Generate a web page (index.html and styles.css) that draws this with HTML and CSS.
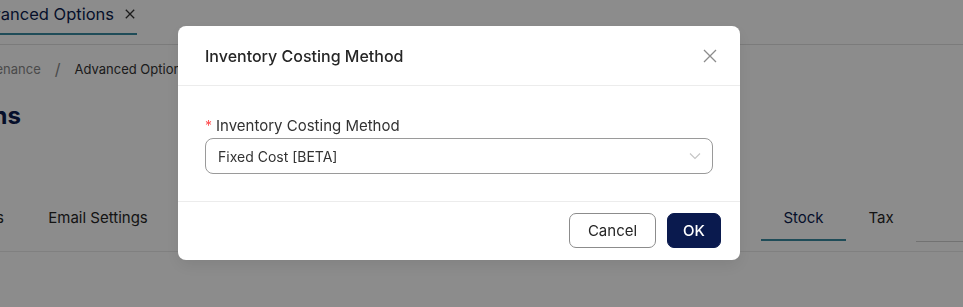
FILE: index.html
```html
<!DOCTYPE html>
<html>
<head>
<meta charset="utf-8">
<link rel="stylesheet" href="styles.css">
</head>
<body>
<div class="page">
  <div class="tabbar">
    <div class="tab-wrap">
      <div class="tab-active"><span>Advanced Options</span><svg class="tab-x" width="10" height="10" viewBox="0 0 10 10"><path d="M0.8 0.8L9.2 9.2M9.2 0.8L0.8 9.2" stroke="#333" stroke-width="1.3" fill="none"/></svg></div>
    </div>
  </div>
  <div class="crumbs-wrap">
    <div class="crumbs"><span class="crumb-muted">Maintenance</span><span class="crumb-sep">/</span><span class="crumb">Advanced Options</span></div>
  </div>
  <div class="heading-wrap"><h1 class="heading">Advanced Options</h1></div>
  <div class="card">
    <div class="subtabs">
      <div class="subtab-lead"><span class="subtab">Options</span></div>
      <span class="subtab w-email">Email Settings</span>
      <span class="subtab-gap"></span>
      <span class="subtab active w-stock">Stock</span>
      <span class="subtab w-tax">Tax</span>
      <span class="subtab-fill"></span>
    </div>
  </div>
</div>

<div class="overlay">
  <div class="modal">
    <div class="modal-header">
      <span class="modal-title">Inventory Costing Method</span>
      <svg class="close" width="14" height="14" viewBox="0 0 14 14"><path d="M1 1L13 13M13 1L1 13" stroke="#8c8c8c" stroke-width="1.3" fill="none"/></svg>
    </div>
    <div class="modal-body">
      <div class="label"><span class="req">*</span>Inventory Costing Method</div>
      <div class="select">
        <span class="select-value">Fixed Cost [BETA]</span>
        <svg class="chev" width="12" height="8" viewBox="0 0 12 8"><path d="M1 1.5L6 6.5L11 1.5" stroke="#c4c4c4" stroke-width="1.1" fill="none"/></svg>
      </div>
    </div>
    <div class="modal-footer">
      <button class="btn btn-cancel">Cancel</button>
      <button class="btn btn-ok">OK</button>
    </div>
  </div>
</div>
</body>
</html>
```
FILE: styles.css
```css
* { box-sizing: border-box; }
html, body { margin: 0; padding: 0; }
body {
  width: 963px;
  height: 307px;
  overflow: hidden;
  font-family: Inter, "Open Sans", sans-serif;
  background: #fff;
  color: #262626;
}
.page { width: 963px; height: 307px; overflow: hidden; }

.tabbar {
  height: 45px;
  border-bottom: 1px solid #e0e0e0;
  display: flex;
}
.tab-wrap { width: 137px; display: flex; justify-content: flex-end; }
.tab-active {
  flex: none;
  height: 35px;
  display: flex;
  align-items: center;
  gap: 11px;
  padding: 0 2px 6px 0;
  border-bottom: 2px solid #3a8aa0;
  color: #0b1d4f;
  font-size: 16.5px;
  white-space: nowrap;
}
.tab-x { display: block; }

.crumbs-wrap { width: 188px; display: flex; justify-content: flex-end; height: 47px; align-items: center; }
.crumbs { flex: none; white-space: nowrap; font-size: 13px; display: flex; align-items: center; }
.crumb-muted { color: #888; }
.crumb-sep { color: #888; margin: 0 14px; font-size: 16px; }
.crumb { color: #333; }

.heading-wrap { width: 21px; display: flex; justify-content: flex-end; height: 46px; align-items: center; }
.heading { flex: none; margin: 0; white-space: nowrap; font-size: 24px; font-weight: 700; color: #0b1d4f; }

.card { margin-top: 58px; border-bottom: 1px solid #eaeaea; height: 56px; }
.subtabs { display: flex; height: 45px; align-items: stretch; }
.subtab-lead { width: 24px; display: flex; justify-content: flex-end; }
.subtab {
  flex: none;
  padding: 0 23px;
  display: flex;
  align-items: center;
  justify-content: center;
  font-size: 15px;
  color: #262626;
  white-space: nowrap;
  border-bottom: 2px solid transparent;
}
.subtab-lead .subtab { padding-right: 20px; }
.w-email { width: 148px; padding: 0; }
.subtab-gap { width: 589px; flex: none; }
.w-stock { width: 85px; padding: 0; }
.w-tax { width: 70px; padding: 0; }
.subtab.active { color: #0b1d4f; border-bottom-color: #3a8aa0; }
.subtab-fill { flex: 1; border-bottom: 1px solid #d0d0d0; margin-bottom: -1px; }

.overlay {
  position: fixed;
  inset: 0;
  background: rgba(0,0,0,0.45);
  padding: 26px 0 0 178px;
}
.modal {
  width: 562px;
  background: #fff;
  border-radius: 8px;
  box-shadow: 0 6px 16px rgba(0,0,0,0.08);
}
.modal-header {
  height: 60px;
  padding: 0 23px 0 27px;
  display: flex;
  align-items: center;
  justify-content: space-between;
  border-bottom: 1px solid #ececec;
}
.modal-title { font-size: 16px; font-weight: 500; color: #262626; }
.close { display: block; }
.modal-body { padding: 29px 27px 27px 27px; }
.label { font-size: 15px; color: #333; line-height: 22px; height: 23px; display: flex; }
.req { color: #ff4d4f; margin-right: 4px; font-size: 14px; }
.select {
  height: 36px;
  border: 1px solid #9a9a9a;
  border-radius: 8px;
  display: flex;
  align-items: center;
  justify-content: space-between;
  padding: 0 11px 0 12px;
}
.select-value { font-size: 14px; color: #333; }
.chev { display: block; }
.modal-footer {
  border-top: 1px solid #ececec;
  padding: 11px 19px 12px;
  display: flex;
  justify-content: flex-end;
  gap: 11px;
}
.btn {
  height: 35px;
  border-radius: 7px;
  font-family: inherit;
  font-size: 15px;
  padding: 0;
  cursor: pointer;
}
.btn-cancel { width: 87px; background: #fff; border: 1px solid #8c8c8c; color: #262626; }
.btn-ok { width: 54px; background: #0a1a4e; border: 1px solid #0a1a4e; color: #fff; font-weight: 500; }
```
